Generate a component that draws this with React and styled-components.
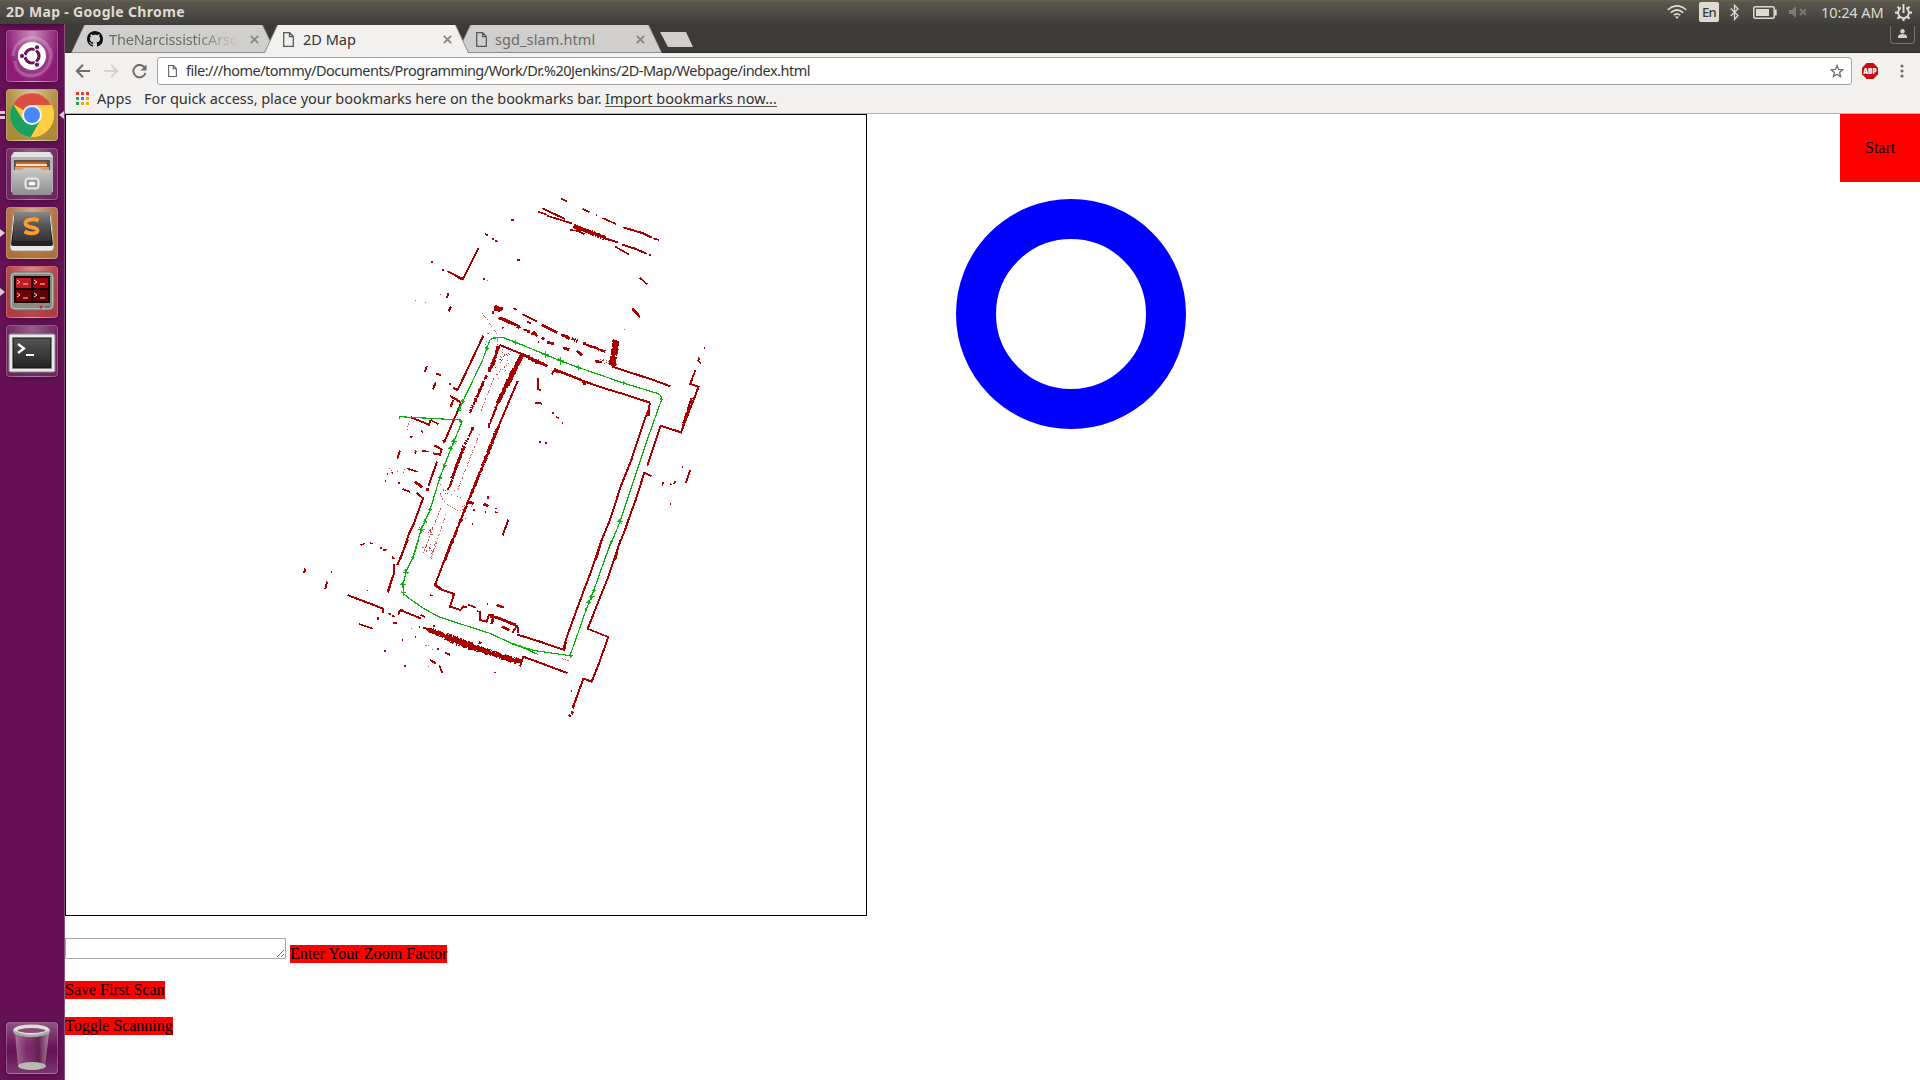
import React from "react";
import styled, { createGlobalStyle, css } from "styled-components";

const Global = createGlobalStyle`
  *{box-sizing:border-box}
  html,body{margin:0;height:100%;background:#fff}
  body{overflow:hidden}
`;
const ui = css`font-family:"Noto Sans","Open Sans",sans-serif;white-space:nowrap;`;

const Desktop = styled.div`width:1920px;height:1080px;display:flex;flex-direction:column;background:#fff;overflow:hidden;`;
const Panel = styled.header`
  ${ui} height:24px;flex:none;display:flex;align-items:center;padding:0 8px 0 6px;
  background:linear-gradient(#65624f 0,#5a574e 2px,#403f3a 24px);color:#dfdbd2;
`;
const WindowTitle = styled.div`font-size:14px;font-weight:700;letter-spacing:.33px;flex:1;line-height:24px;`;
const Tray = styled.div`display:flex;align-items:center;height:24px;`;
const TrayIcon = styled.svg`display:block;flex:none;margin-right:${p => p.$gap || 0}px;`;
const Lang = styled.div`
  width:20px;height:20px;border-radius:2px;background:#dfdbd2;color:#3c3b37;font-size:13px;line-height:20px;
  text-align:center;margin-right:11px;letter-spacing:-.6px;font-weight:500;
`;
const Clock = styled.div`font-size:14.5px;letter-spacing:-.1px;width:62px;margin-right:12px;line-height:23px;`;

const Body = styled.div`display:flex;flex:1;min-height:0;`;
const Launcher = styled.nav`
  width:65px;flex:none;display:flex;flex-direction:column;padding:6px 0 6px 6px;gap:7px;
  background:linear-gradient(#4a0c3e 0,#661155 5px,#661155);border-right:1px solid #865078;
`;
const Tile = styled.div`
  width:52px;height:52px;border-radius:4px;flex:none;position:relative;
  background:${p => p.$bg};border:1px solid ${p => p.$edge || "rgba(255,255,255,.22)"};
  box-shadow:0 1px 4px rgba(0,0,0,.3);
  margin-top:${p => (p.$bottom ? "auto" : 0)};
  svg{display:block;width:52px;height:52px;margin:-1px;}
`;
const Pip = styled.i`
  position:absolute;top:21px;${p => (p.$right ? "right:-7px" : "left:-7px")};
  border:solid transparent;border-width:4px 0;
  ${p => (p.$right ? "border-right:5px solid #d9cdd6" : "border-left:5px solid #d9cdd6")};
`;
const Bars = styled.i`position:absolute;top:21px;left:-7px;width:5px;height:8px;border:solid #d9cdd6;border-width:3px 0;`;

const Browser = styled.main`flex:1;min-width:0;display:flex;flex-direction:column;`;
const Strip = styled.div`
  height:29px;flex:none;background:#3c3b37;display:flex;align-items:flex-start;padding:1px 5px 0 6px;
  border-bottom:1px solid #2c2b28;position:relative;
`;
const TabShape = styled.div`
  ${ui} width:205px;height:28px;margin-right:-12px;flex:none;position:relative;z-index:${p => (p.$active ? 3 : 1)};
  display:flex;align-items:center;padding:0 17px 0 ${p => p.$pad || 17}px;font-size:14.5px;color:${p => (p.$active ? "#333" : "#6a6a69")};
  &::before,&::after{content:"";position:absolute;inset:0;z-index:-1;
    clip-path:polygon(13px 0,192px 0,205px 100%,0 100%);background:#8e8d8b;}
  &::after{inset:0 1px ${p => (p.$active ? 0 : 1)}px 1px;background:${p => (p.$active ? "#f2f1ef" : "#d0cfcd")};
    clip-path:polygon(13px 0,190px 0,203px 100%,0 100%);}
  svg{flex:none;display:block;}
`;
const TabText = styled.span`
  flex:1;margin-left:${p => p.$ml}px;overflow:hidden;letter-spacing:${p => p.$ls || 0}px;line-height:26px;margin-bottom:1px;
  ${p => p.$fade && "-webkit-mask-image:linear-gradient(90deg,#000 60%,transparent 92%);"}
`;
const NewTab = styled.div`width:34px;height:15px;margin:7px 0 0 10px;background:#d0cfcd;clip-path:polygon(0 0,26px 0,33px 15px,8px 15px);`;
const Profile = styled.div`
  width:25px;height:18px;margin-left:auto;margin-top:1px;border:1px solid #77756f;border-top:0;border-radius:0 0 4px 4px;
  display:flex;justify-content:center;padding-top:3px;
`;
const Toolbar = styled.div`height:35px;flex:none;background:#f2f1ef;display:flex;align-items:center;padding:1px 14px 0 10px;`;
const NavIcon = styled.svg`display:block;flex:none;margin-right:${p => p.$gap}px;`;
const Omnibox = styled.div`
  ${ui} width:1695px;height:28px;background:#fff;border:1px solid #a5a4a2;border-radius:3px;margin:0 10px 0 0;
  display:flex;align-items:center;padding:0 7px 0 10px;font-size:14.5px;color:#333;
`;
const Url = styled.span`flex:1;margin-left:9px;letter-spacing:-.5px;line-height:26px;margin-bottom:2px;`;
const Bookmarks = styled.div`
  ${ui} height:26px;flex:none;background:#f2f1ef;border-bottom:1px solid #b5b4b2;display:flex;align-items:center;
  padding:0 0 4px 11px;font-size:14.5px;color:#333;
`;
const AppsText = styled.span`width:47px;margin:0 0 2px 8px;letter-spacing:.1px;`;
const Hint = styled.span`width:461px;letter-spacing:-.04px;margin-bottom:2px;`;
const ImportLink = styled.span`letter-spacing:.02px;line-height:16px;border-bottom:1px solid #555;`;

const Page = styled.section`
  flex:1;min-height:0;background:#fff;font:16px/18px "Liberation Serif","Times New Roman",serif;color:#000;
  display:flex;flex-direction:column;
`;
const Stage = styled.div`display:flex;align-items:flex-start;`;
const MapCanvas = styled.svg`width:802px;height:802px;border:1px solid #000;flex:none;display:block;`;
const Ring = styled.div`width:230px;height:230px;border:40px solid #00f;border-radius:50%;margin:85px 0 0 89px;`;
const RedButton = styled.div`background:#f00;width:max-content;letter-spacing:${p => p.$ls || 0}px;`;
const StartButton = styled(RedButton)`margin-left:auto;padding:25px;width:80px;height:68px;`;
const Controls = styled.div`display:flex;flex-direction:column;gap:18px;margin-top:22px;`;
const ZoomRow = styled.div`display:flex;gap:4px;height:25px;align-items:flex-end;`;
const ZoomInput = styled.textarea`width:221px;height:21px;border:1px solid #a9a9a9;margin:0 0 4px;padding:2px;display:block;outline:0;background:#fff;`;

const DocIcon = ({ w = 11, h = 15 }) => (
  <svg width={w} height={h} viewBox="0 0 11 15"><path d="M.7.7h6l3.6 3.8v9.8H.7zM6.5.7v4h3.8" fill="none" stroke="#5a5a5a" strokeWidth="1.3" /></svg>
);
const Close = () => (
  <svg width="9" height="9" viewBox="0 0 9 9"><path d="M.8.8l7.4 7.4M8.2.8L.8 8.2" stroke="#858584" strokeWidth="1.7" /></svg>
);
const Octocat = () => (
  <svg width="16" height="16" viewBox="0 0 16 16"><path fill="#111" d="M8 0C3.58 0 0 3.58 0 8c0 3.54 2.29 6.53 5.47 7.59.4.07.55-.17.55-.38 0-.19-.01-.82-.01-1.49-2.01.37-2.53-.49-2.69-.94-.09-.23-.48-.94-.82-1.13-.28-.15-.68-.52-.01-.53.63-.01 1.08.58 1.23.82.72 1.21 1.87.87 2.33.66.07-.52.28-.87.51-1.07-1.78-.2-3.64-.89-3.64-3.95 0-.87.31-1.59.82-2.15-.08-.2-.36-1.02.08-2.12 0 0 .67-.21 2.2.82.64-.18 1.32-.27 2-.27s1.36.09 2 .27c1.53-1.04 2.2-.82 2.2-.82.44 1.1.16 1.92.08 2.12.51.56.82 1.27.82 2.15 0 3.07-1.87 3.75-3.65 3.95.29.25.54.73.54 1.48 0 1.07-.01 1.93-.01 2.2 0 .21.15.46.55.38A8.01 8.01 0 0 0 16 8c0-4.42-3.58-8-8-8z" /></svg>
);

/* ---------- launcher drawings ---------- */
const UbuntuArt = () => (
  <svg viewBox="0 0 52 52">
    <g fill="none" stroke="#fff" opacity=".22" strokeWidth="3">
      <path d="M7 26C8 10 26 2 38 12c8 7 8 18 3 25" /><path d="M44 18c5 14-6 28-19 28C15 46 9 38 9 31" />
      <path d="M45 30C40 46 20 50 10 37" strokeWidth="1.5" /><path d="M14 13C25 3 44 8 45 25" strokeWidth="1.5" />
    </g>
    <circle cx="26" cy="26" r="14" fill="#fff" />
    <circle cx="26" cy="26" r="7" fill="none" stroke="#6b1556" strokeWidth="3.2" />
    <g stroke="#fff" strokeWidth="1.3"><path d="M26 26L16 26M26 26l5-9M26 26l5 9" /></g>
    <circle cx="26" cy="26" r="5.2" fill="#fff" />
    <g fill="#6b1556" stroke="#fff" strokeWidth="1"><circle cx="16" cy="26" r="2.6" /><circle cx="31" cy="17.3" r="2.6" /><circle cx="31" cy="34.7" r="2.6" /></g>
  </svg>
);
const ChromeArt = () => (
  <svg viewBox="0 0 52 52">
    <circle cx="26" cy="26" r="22" fill="#fc3" />
    <path d="M26 26L6.9 15A22 22 0 0 1 45.4 16H26z" fill="#dc5044" />
    <path d="M7 15A22 22 0 0 0 25 48l9.500-17L17 31z" fill="#1aa160" />
    <path d="M26 16h19.500A22 22 0 0 1 25 48l10-17z" fill="#ffce44" />
    <circle cx="26" cy="26" r="10" fill="#f4f4f4" /><circle cx="26" cy="26" r="8" fill="#4a89f5" />
  </svg>
);
const FilesArt = () => (
  <svg viewBox="0 0 52 52">
    <defs><linearGradient id="fg" x2="0" y2="1"><stop stopColor="#c9c9c9" /><stop offset="1" stopColor="#8f8f8f" /></linearGradient></defs>
    <path d="M8 4h36l3 4v36H5V8z" fill="#b4b4b4" /><path d="M8 4h36l3 5H5z" fill="#e1e1df" />
    <path d="M8 12h36v11H8z" fill="#555" /><path d="M10 14h30l2 8H9z" fill="#c96a26" /><path d="M10 16h31v2H10z" fill="#f4ddc8" />
    <path d="M9 19h34v4H9z" fill="#e79a55" />
    <path d="M6 22h10l2-2h16l2 2h10v22q0 3-2 3H8q-2 0-2-3z" fill="url(#fg)" />
    <rect x="19" y="30" width="14" height="11" rx="3" fill="#d5d5d5" stroke="#eee" /><rect x="22" y="33" width="8" height="5" fill="#fff" stroke="#555" />
  </svg>
);
const SArt = () => (
  <svg viewBox="0 0 52 52">
    <defs><linearGradient id="sg" x2="0" y2="1"><stop stopColor="#888" /><stop offset=".45" stopColor="#555" /><stop offset="1" stopColor="#333" /></linearGradient></defs>
    <path d="M7 8h38l3 32q0 4-4 4H8q-4 0-4-4z" fill="#e9e9e9" stroke="#9b8b7b" strokeWidth=".7" />
    <path d="M9 6h34l4 31q0 2-2 2H7q-2 0-2-2z" fill="#222" />
    <path d="M10 5h32q2 0 2 2l1 24q0 3-3 3H10q-3 0-3-3L8 7q0-2 2-2z" fill="url(#sg)" />
    <path d="M32.500 13.500c-5-2.500-13-1-13 3 0 5 12 3 12 7 0 3-7 4-13 1" fill="none" stroke="#ff9d2e" strokeWidth="3.800" />
  </svg>
);
const TerminatorArt = () => (
  <svg viewBox="0 0 52 52">
    <rect x="4" y="6" width="44" height="38" rx="5" fill="#b5b5b0" stroke="#686862" /><rect x="6" y="8" width="40" height="34" rx="3" fill="#8b8b86" />
    <rect x="8" y="10" width="36" height="27" fill="#190000" />
    <g fill="#a4000d"><path d="M10 12h15v10H10z" fill="#c01a26" /><path d="M27 12h15v10H27z" /><path d="M10 24h15v11H10z" fill="#6d0009" /><path d="M27 24h15v11H27z" fill="#5d0007" /></g>
    <g fill="none" stroke="#ffd0d0" strokeWidth="1"><path d="M11 14l3 2-3 2M17 18h5M28 14l3 2-3 2M34 18h5M11 27l3 2-3 2M17 32h5M28 27l3 2-3 2M34 32h5" /></g>
    <circle cx="35" cy="41" r="1.500" fill="#e11" /><path d="M39 41h5" stroke="#555" />
  </svg>
);
const TerminalArt = () => (
  <svg viewBox="0 0 52 52">
    <defs><linearGradient id="tg" x2="0" y2="1"><stop stopColor="#555" /><stop offset="1" stopColor="#242424" /></linearGradient></defs>
    <rect x="3" y="9" width="46" height="38" rx="1.500" fill="#e9e9e7" stroke="#858583" /><rect x="7" y="13" width="38" height="30" fill="url(#tg)" stroke="#111" />
    <path d="M12 19l6 4.500-6 4.500M20 30h8" fill="none" stroke="#fff" strokeWidth="2.200" />
  </svg>
);
const TrashArt = () => (
  <svg viewBox="0 0 52 52">
    <defs><linearGradient id="bin"><stop stopColor="#b691ae" stopOpacity=".75" /><stop offset=".35" stopColor="#944580" stopOpacity=".5" /><stop offset=".7" stopColor="#662050" stopOpacity=".8" /><stop offset="1" stopColor="#b7a2b2" stopOpacity=".8" /></linearGradient></defs>
    <path d="M9 11h34l-4 33q-13 7-27 0z" fill="url(#bin)" />
    <ellipse cx="26" cy="44" rx="14" ry="4" fill="#b5bab3" />
    <ellipse cx="25.500" cy="8.500" rx="16.500" ry="4.300" fill="#8a4a7a" stroke="#ddded9" strokeWidth="3.500" />
    <path d="M8 10q17 8 35 0" fill="none" stroke="#a7aaa5" strokeWidth="2.500" />
  </svg>
);

/* ---------- scan map ---------- */
const RED = "#a80000", GREEN = "#0cae0c";
let seed = 7;
const rnd = () => ((seed = (seed * 16807) % 2147483647) / 2147483647);
/* Ragged wall: short strokes across the line from (x1,y1) to (x2,y2). */
const ragged = (x1, y1, x2, y2, w, step = 3, density = 1) => {
  const len = Math.hypot(x2 - x1, y2 - y1), nx = -(y2 - y1) / len, ny = (x2 - x1) / len;
  let d = "";
  for (let t = 0; t < len; t += step) {
    if (rnd() > density) continue;
    const x = x1 + ((x2 - x1) * t) / len, y = y1 + ((y2 - y1) * t) / len;
    const a = w * (0.25 + rnd() * 0.4), b = w * (0.25 + rnd() * 0.4);
    d += `M${(x - nx * a).toFixed(1)} ${(y - ny * a).toFixed(1)}L${(x + nx * b).toFixed(1)} ${(y + ny * b).toFixed(1)}`;
  }
  return d;
};
/* Loose returns scattered along a line. */
const dots = (x1, y1, x2, y2, spread, n) => {
  let d = "";
  for (let i = 0; i < n; i++) {
    const t = rnd();
    d += `M${(x1 + (x2 - x1) * t + (rnd() - 0.5) * spread).toFixed(1)} ${(y1 + (y2 - y1) * t + (rnd() - 0.5) * spread).toFixed(1)}h3`;
  }
  return d;
};

const north = {
  fine: "M573 56L592 65M638 86L658 96M677 103l4 2M697 114L738 132M850 175L868 180M505 95L530 104M530 107L605 130M600 150L625 153L643 162M838 224l4 1M736 200L776 223M424 120h8M345 162l8 4M366 175l5 3M375 182l8 4M442 240h8M340 296l5 3M184 246h5M216 272l5-3M171 558L165 576M198 581l14 3M976 570L965 600M1002 504h3M988 533l-3 9 8 8M430 385l10 4M457 402L500 424M470 424l12 6M505 483l2 5M395 442l5 2M325 204L312 232",
  line: "M760 142L820 160L845 173M517 85L585 117M705 175L745 188M757 194L795 206L830 221M318 220L278 298L232 273M236 340L230 353M243 380L236 394M810 293L832 314M787 384L810 413M340 467L262 632M390 495L455 522L530 558M390 495L360 570M545 583L555 568L635 600M727 560L850 600L901 619M965 600L960 612L986 620L933 757L872 737L832 857M400 415L445 438",
  thick: "M640 148L705 174M727 480L747 489M790 389l14 14M515 434L562 458M375 380l14 9M365 398h6M388 416h12M490 455l8 8M515 473l8 4M530 486l22 6M620 512l16 14M580 504l18 5M675 543l20 4M265 292l15 6M552 572l20 4",
  dust: "M135 361h3M166 368h3M210 344h3M352 302h3M763 448h3M352 462h4M345 495h4M348 485h3M335 398l20 25 27 42-2 60"
};
const middle = {
  fine: "M198 42l14 3M236 70l8 4M182 180L205 192M153 213l5 4M120 232l9-3M90 272L82 296M135 280l4-8M155 272l21 3M98 387L120 396M110 325L143 336M65 339h4M50 343h3M45 364h4M85 370h4M505 55L503 88L512 90M545 158l8 3M557 170l10 4M575 190h4M506 246h6M525 249h6M878 377v-8l5-2M900 374l4-2M912 372l4-8M936 321h3M900 433h3M0 549l8 2M30 566h5M40 569l8 1M67 592l6 5M355 409v8M344 456h3M375 455l7 4M376 446h5M310 450h4M275 481h3M305 492h3",
  line: "M171 17L165 36M189 89l8-22M248 82l14 8M240 108l18 10 15 10M250 120l-8 20M273 130L222 248M123 172L177 194L182 180M193 256L215 268L210 284L190 280M201 305L175 379M140 398L159 415L132 490L118 518L90 600M495 128l20 3M840 128L836 150L825 175L784 300L752 380L720 480L695 540L678 600M555 30L640 63L700 84L770 105L840 128M844 348L823 338L797 420L775 480L765 510L745 560L736 600M960 331L948 368M415 479L398 526M443 63L385 200",
  thick: "M135 365L157 382M168 390l10-3M340 432l15 6M295 425l16 6M835 150v18M225 242l-6 3M640 63l4 12",
  dust: "M112 210l3-18 8-18M57 326l5-3M372 55l-40 100M328 222L262 392M210 400l10 22 18 17 26 12 20-2M228 462L183 598M212 445L160 580"
};
const south = {
  fine: "M122 97h4M232 152h3M265 230l-2 10M294 220l10 4M305 227l10 3M207 252L248 266M310 248l10 2M283 334h4M343 379h4M212 16l13-6M242 11h7M270 23l6 2M284 28l6 2M307 50l6 6M535 194L557 203M560 212l12 5M684 262V280M893 266L955 291M448 376L457 400M440 327h7M612 398h5M571 308h4M388 262h3M336 301h3M375 292h3M844 454h3M420 165l8 2M590 193h3M430 255l4 5M392 224l13 8",
  line: "M42 100l4-14M112 125L105 148M172 165L280 206L278 219M325 224l5-14M330 210L392 235M312 72L312 100L293 155M353 0L322 75M486 0L435 135L450 147L492 162L480 200L512 210L520 199L532 203M570 220L570 240L590 245L597 225L612 226M612 230L680 258L668 278M680 283L750 305L823 330L827 300L880 155L903 95L935 0M992 0L975 50L957 105L935 160L893 266M955 291L925 375L905 425L880 416L848 505M398 262L430 273M690 380L700 350L832 399M420 360L438 370M465 338L480 344",
  thick: "M620 195L641 202M293 157L300 136M333 207l3 7M437 136l14 10M635 260L658 270M610 230L605 252M848 514l-3 9M841 525l-4 5M567 307l5 3M848 502l4-8M822 326l5-20M600 230L620 232L678 255",
  dust: "M397 24l14-3M408 34l4 6M421 54l18-54M365 264l3 7M406 315l10 3M425 328l4 1M415 380l3 1M817 356l20 6"
};
const textures = {
  north: ragged(612, 138, 705, 174, 12, 2) + ragged(705, 174, 740, 187, 5) + ragged(738, 488, 726, 556, 18, 2) + ragged(375, 386, 398, 386, 16) + ragged(388, 414, 505, 468, 8, 3, .75) + ragged(570, 463, 622, 483, 9, 3, .8) + ragged(640, 490, 710, 516, 8, 3, .85) + ragged(457, 522, 410, 620, 12, 2) + ragged(460, 525, 530, 556, 10) + ragged(372, 535, 358, 572, 9) + ragged(382, 500, 375, 535, 7),
  middle: ragged(447, 0, 415, 62, 12, 2) + ragged(415, 62, 383, 130, 11, 2) + ragged(383, 130, 354, 205, 7) + ragged(375, 0, 355, 35, 9) + ragged(350, 45, 300, 158, 8, 3, .85) + ragged(310, 200, 285, 255, 8, 3, .9) + ragged(282, 260, 246, 355, 9, 2) + ragged(246, 360, 235, 388, 6) + ragged(385, 200, 345, 300, 9, 2) + ragged(345, 300, 300, 412, 8, 2) + ragged(298, 415, 225, 600, 7, 2) + ragged(486, 0, 533, 18, 10) + ragged(965, 115, 937, 200, 7) + ragged(726, 0, 730, 18, 16),
  south: ragged(415, 268, 470, 290, 14, 2) + ragged(468, 290, 550, 321, 22, 2) + ragged(550, 322, 690, 366, 16, 2),
  northDust: dots(385, 500, 380, 600, 26, 14) + dots(405, 515, 400, 560, 30, 14) + dots(680, 540, 710, 548, 12, 10),
  middleDust: dots(410, 0, 390, 20, 30, 10) + dots(55, 340, 130, 330, 20, 6) + dots(215, 390, 260, 400, 35, 10) + dots(180, 500, 180, 525, 16, 10) + dots(165, 565, 190, 565, 20, 10) + dots(290, 455, 300, 460, 45, 4)
};
const greenUpper = "M88 178V170L272 180L277 184L243 265L210 352L180 450L153 510L126 600M703 600L750 485L835 230L875 118L873 108L865 101L760 69L625 22L572 3L527 -16L437 -53L400 -67L370 -66L360 -60L350 -35L338 0L278 125L266 155";
const greenLower = "M386 0L368 55L348 95L339 135L340 160L352 171L400 205L450 232L600 280L675 315L735 332L840 347L890 205L910 155L940 70L965 0M670 310L743 343L690 317";
const star = (x, y, s) => `M${x - s} ${y}h${2 * s}M${x} ${y - s}v${2 * s}M${x - s * .6} ${y - s * .6}l${s * 1.2} ${s * 1.2}`;
const upperStops = [[437, -53, 7], [527, -16, 10], [572, 3, 11], [625, 22, 8], [760, 69, 6], [875, 118, 5], [750, 485, 8], [350, -35, 6], [278, 125, 8], [268, 147, 6], [252, 245, 9], [242, 265, 8], [225, 317, 7], [211, 352, 6], [180, 450, 6], [165, 484, 6], [155, 508, 11], [272, 184, 4]];
const lowerStops = [[348, 97, 10], [339, 134, 8], [340, 159, 8], [368, 54, 5], [842, 348, 6], [905, 170, 9], [896, 188, 8], [912, 153, 5], [888, 208, 4]];

const ScanPart = ({ x, y, part, tex, dust }) => (
  <g transform={`translate(${x} ${y}) scale(.33333)`} fill="none" stroke={RED}>
    <path d={part.fine} strokeWidth="5" /><path d={part.line} strokeWidth="5.900" /><path d={part.thick} strokeWidth="8" />
    <path d={tex} strokeWidth="3.600" />
    <path d={part.dust} strokeWidth="2.600" strokeDasharray="4 5 2 3 7 4" opacity=".75" />
    {dust && <path d={dust} strokeWidth="3" opacity=".7" />}
  </g>
);
const ScanMap = () => (
  <MapCanvas viewBox="66 115 800 800" shapeRendering="crispEdges">
    <ScanPart x={370} y={180} part={north} tex={textures.north} dust={textures.northDust} />
    <ScanPart x={370} y={360} part={middle} tex={textures.middle} dust={textures.middleDust} />
    <ScanPart x={290} y={540} part={south} tex={textures.south} />
    <g fill="none" stroke={GREEN}>
      <g transform="translate(370 360) scale(.33333)">
        <path d={greenUpper} strokeWidth="3.600" />
        <path d={upperStops.map(s => star(...s)).join("")} strokeWidth="2.800" />
      </g>
      <g transform="translate(290 540) scale(.33333)">
        <path d={greenLower} strokeWidth="3.600" />
        <path d={lowerStops.map(s => star(...s)).join("")} strokeWidth="2.800" />
      </g>
    </g>
  </MapCanvas>
);

const glow = (a, b) => `radial-gradient(ellipse at 50% 0,${a} 0,${b} 75%)`;

export default function App() {
  return (
    <Desktop>
      <Global />
      <Panel>
        <WindowTitle>2D Map - Google Chrome</WindowTitle>
        <Tray>
          <TrayIcon $gap={12} width="20" height="14" viewBox="0 0 20 14"><g fill="none" stroke="#dfdbd2" strokeWidth="1.700"><path d="M.8 4.800q9.200-8 18.400 0M3.800 7.600q6.200-5.200 12.400 0M6.800 10.200q3.200-2.600 6.400 0" /></g><path d="M8 11.500h4l-2 2.400z" fill="#dfdbd2" /></TrayIcon>
          <Lang>En</Lang>
          <TrayIcon $gap={14} width="9" height="17" viewBox="0 0 9 17"><path d="M.7 4.500l7.300 7-3.500 4V1.300L8 5 .7 12" fill="none" stroke="#dfdbd2" strokeWidth="1.300" /></TrayIcon>
          <TrayIcon $gap={12} width="24" height="13" viewBox="0 0 24 13"><rect x=".8" y=".8" width="20.400" height="11.400" rx="1.500" fill="none" stroke="#dfdbd2" strokeWidth="1.500" /><path d="M3 3h13v7H3zM22 3.500h1.700v6H22z" fill="#dfdbd2" /></TrayIcon>
          <TrayIcon $gap={14} width="18" height="12" viewBox="0 0 18 12"><path d="M0 4h3l4-4v12L3 8H0z" fill="#7b7972" /><path d="M11 3l6 6M17 3l-6 6" stroke="#7b7972" strokeWidth="1.800" /></TrayIcon>
          <Clock>10:24 AM</Clock>
          <TrayIcon width="17" height="17" viewBox="0 0 17 17"><circle cx="8.500" cy="8.700" r="5.400" fill="none" stroke="#dfdbd2" strokeWidth="1.900" /><path d="M2.500 2.700l2 2M14.500 2.700l-2 2M0 8.700h3M14 8.700h3M2.500 14.700l2-2M14.500 14.700l-2-2M8.500 14v3" stroke="#dfdbd2" strokeWidth="2.200" /><path d="M8.500 1v8" stroke="#4a4842" strokeWidth="5" /><path d="M8.500 0v9" stroke="#dfdbd2" strokeWidth="2" /></TrayIcon>
        </Tray>
      </Panel>
      <Body>
        <Launcher>
          <Tile $bg={glow("#c98fbd", "#8d1c74")}><UbuntuArt /></Tile>
          <Tile $bg={glow("#d8c898", "#ac8a3c")}><Bars /><ChromeArt /><Pip $right /></Tile>
          <Tile $bg={glow("#94638a", "#702761")}><FilesArt /></Tile>
          <Tile $bg={glow("#cfa988", "#ad7040")}><Pip /><SArt /></Tile>
          <Tile $bg={glow("#d98a8a", "#b23c43")}><Pip /><TerminatorArt /></Tile>
          <Tile $bg={glow("#94638a", "#702761")}><TerminalArt /></Tile>
          <Tile $bottom $bg="linear-gradient(#8c5480 0,#6a185a 45%,#651054 55%,#79366c)"><TrashArt /></Tile>
        </Launcher>
        <Browser>
          <Strip>
            <TabShape $pad={16}><Octocat /><TabText $fade $ml={6} $ls={-0.15}>TheNarcissisticArso</TabText><Close /></TabShape>
            <TabShape $active $pad={19}><DocIcon /><TabText $ml={9} $ls={0}>2D Map</TabText><Close /></TabShape>
            <TabShape $pad={19}><DocIcon /><TabText $ml={8} $ls={0.1}>sgd_slam.html</TabText><Close /></TabShape>
            <NewTab />
            <Profile><svg width="9" height="9" viewBox="0 0 9 9"><circle cx="4.500" cy="2.200" r="2.200" fill="#d5d2ca" /><path d="M0 9V7q1-2 4.500-2T9 7v2z" fill="#d5d2ca" /></svg></Profile>
          </Strip>
          <Toolbar>
            <NavIcon $gap={14} width="15" height="14" viewBox="0 0 15 14"><path d="M15 7H2M8 .8L1.800 7 8 13.200" fill="none" stroke="#6e6d6c" strokeWidth="2" /></NavIcon>
            <NavIcon $gap={13} width="15" height="14" viewBox="0 0 15 14"><path d="M0 7h13M7 .8L13.200 7 7 13.200" fill="none" stroke="#d5d4d2" strokeWidth="2" /></NavIcon>
            <NavIcon $gap={10} width="15" height="15" viewBox="0 0 15 15"><path d="M12.500 3.300A6.200 6.200 0 1 0 13.500 9" fill="none" stroke="#6e6d6c" strokeWidth="2" /><path d="M14.500.5v6h-6z" fill="#6e6d6c" /></NavIcon>
            <Omnibox>
              <DocIcon w={9} h={12} />
              <Url>file:///home/tommy/Documents/Programming/Work/Dr.%20Jenkins/2D-Map/Webpage/index.html</Url>
              <svg width="14" height="14" viewBox="0 0 14 14"><path d="M7 1.500l1.600 3.900 4.200.3-3.200 2.700 1 4.100L7 10.300l-3.600 2.200 1-4.100L1.200 5.700l4.200-.3z" fill="none" stroke="#6e6d6c" strokeWidth="1.300" /></svg>
            </Omnibox>
            <NavIcon $gap={22} width="16" height="16" viewBox="0 0 16 16"><path d="M4.700 0h6.600L16 4.700v6.600L11.300 16H4.700L0 11.300V4.700z" fill="#c70d0d" /><text x="8" y="11" textAnchor="middle" fontFamily="Open Sans,sans-serif" fontWeight="800" fontSize="8" textLength="13.500" lengthAdjust="spacingAndGlyphs" fill="#fff">ABP</text></NavIcon>
            <NavIcon $gap={0} width="4" height="14" viewBox="0 0 4 14"><g fill="#6e6d6c"><circle cx="2" cy="2" r="1.600" /><circle cx="2" cy="7" r="1.600" /><circle cx="2" cy="12" r="1.600" /></g></NavIcon>
          </Toolbar>
          <Bookmarks>
            <svg width="13" height="13" viewBox="0 0 13 13"><path d="M0 0h3v3H0zM5 0h3v3H5zM10 0h3v3h-3z" fill="#ee3b30" /><path d="M0 5h3v3H0zM0 10h3v3H0z" fill="#2ba052" /><path d="M5 5h3v3H5z" fill="#2b84f0" /><path d="M10 5h3v3h-3zM5 10h3v3H5zM10 10h3v3h-3z" fill="#f7a60c" /></svg>
            <AppsText>Apps</AppsText>
            <Hint>For quick access, place your bookmarks here on the bookmarks bar.</Hint>
            <ImportLink>Import bookmarks now...</ImportLink>
          </Bookmarks>
          <Page>
            <Stage>
              <ScanMap />
              <Ring />
              <StartButton>Start</StartButton>
            </Stage>
            <Controls>
              <ZoomRow><ZoomInput /><RedButton $ls={0.04}>Enter Your Zoom Factor</RedButton></ZoomRow>
              <RedButton>Save First Scan</RedButton>
              <RedButton>Toggle Scanning</RedButton>
            </Controls>
          </Page>
        </Browser>
      </Body>
    </Desktop>
  );
}
